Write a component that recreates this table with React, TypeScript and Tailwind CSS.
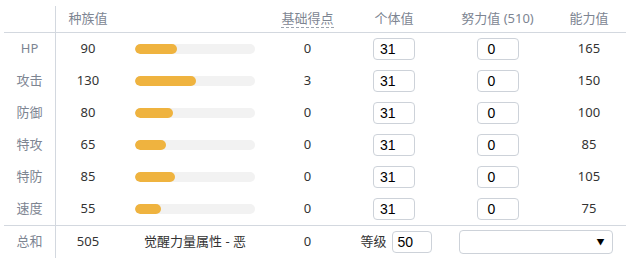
import React from "react";

const rows = [
  { label: "HP", base: 90, pts: 0, iv: "31", ev: "0", stat: 165 },
  { label: "攻击", base: 130, pts: 3, iv: "31", ev: "0", stat: 150 },
  { label: "防御", base: 80, pts: 0, iv: "31", ev: "0", stat: 100 },
  { label: "特攻", base: 65, pts: 0, iv: "31", ev: "0", stat: 85 },
  { label: "特防", base: 85, pts: 0, iv: "31", ev: "0", stat: 105 },
  { label: "速度", base: 55, pts: 0, iv: "31", ev: "0", stat: 75 },
];

const cols = "grid grid-cols-[52px_64px_150px_75px_98px_109px_74px]";

export default function App() {
  return (
    <div
      className="w-[642px] h-[260px] bg-white pl-[4px] pt-[6px] text-[13px] text-[#333]"
      style={{ fontFamily: '"Noto Sans", "Noto Sans CJK SC", sans-serif' }}
    >
      <div className={`${cols} w-[622px] h-[27px] items-center border-b border-[#d3d8df] text-[#7d8592]`}>
        <div className="h-full border-r border-[#d3d8df]" />
        <div className="text-center">种族值</div>
        <div />
        <div className="flex justify-center">
          <span className="border-b border-dashed border-[#9aa2ad] leading-[17px]">基础得点</span>
        </div>
        <div className="text-center">个体值</div>
        <div className="text-center">努力值 (510)</div>
        <div className="text-center">能力值</div>
      </div>
      {rows.map((r) => (
        <div key={r.label} className={`${cols} h-[32px] items-center`}>
          <div className="h-full flex items-center justify-center border-r border-[#d3d8df] text-[#7d8592]">
            {r.label}
          </div>
          <div className="text-center">{r.base}</div>
          <div className="flex justify-center">
            <div className="w-[120px] h-[10px] rounded-full bg-[#f2f2f2] overflow-hidden">
              <div
                className="h-full rounded-full bg-[#efb33f]"
                style={{ width: `${(r.base / 255) * 120}px` }}
              />
            </div>
          </div>
          <div className="text-center">{r.pts}</div>
          <div className="flex justify-center">
            <div
              className="w-[42px] h-[22px] border border-[#cdd2d9] rounded-[4px] flex items-center pl-[6px] text-[14px] text-black"
              style={{ fontFamily: '"Liberation Sans", Arial, sans-serif' }}
            >
              {r.iv}
            </div>
          </div>
          <div className="flex justify-center">
            <div
              className="w-[42px] h-[22px] border border-[#cdd2d9] rounded-[4px] flex items-center pl-[10px] text-[14px] text-black"
              style={{ fontFamily: '"Liberation Sans", Arial, sans-serif' }}
            >
              {r.ev}
            </div>
          </div>
          <div className="text-center">{r.stat}</div>
        </div>
      ))}
      <div className={`${cols} h-[33px] items-center border-t border-[#d3d8df] w-[622px]`}>
        <div className="h-full flex items-center justify-center border-r border-[#d3d8df] text-[#7d8592]">
          总和
        </div>
        <div className="text-center">505</div>
        <div className="text-center whitespace-pre">觉醒力量属性 - 恶</div>
        <div className="text-center">0</div>
        <div className="flex justify-center items-center gap-[5px] pl-[4px]">
          <span>等级</span>
          <div
            className="w-[40px] h-[22px] border border-[#cdd2d9] rounded-[4px] flex items-center pl-[5px] text-[14px] text-black"
            style={{ fontFamily: '"Liberation Sans", Arial, sans-serif' }}
          >
            50
          </div>
        </div>
        <div className="col-span-2 flex justify-center pl-[2px]">
          <div className="w-[154px] h-[24px] border border-[#cdd2d9] rounded-[4px] flex items-center justify-end pr-[7px] text-[8px] text-black">
            ▼
          </div>
        </div>
      </div>
    </div>
  );
}
